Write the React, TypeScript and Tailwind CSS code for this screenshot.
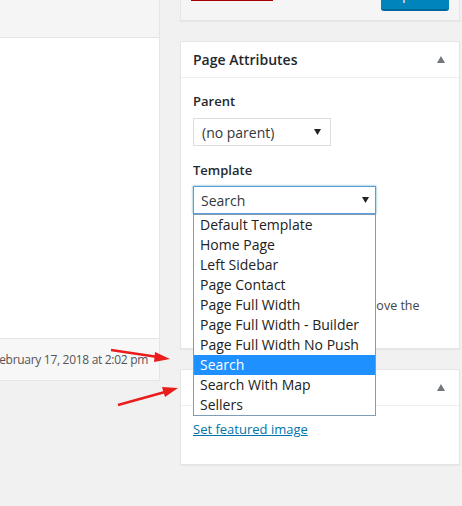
import React from "react";

const templates = [
  "Default Template",
  "Home Page",
  "Left Sidebar",
  "Page Contact",
  "Page Full Width",
  "Page Full Width - Builder",
  "Page Full Width No Push",
  "Search",
  "Search With Map",
  "Sellers",
];

function Caret() {
  return (
    <svg width="8" height="7" viewBox="0 0 8 7" className="fill-[#72777c]">
      <path d="M0 7 L4 0 L8 7 Z" />
    </svg>
  );
}

function SelectArrow() {
  return (
    <svg width="7" height="6" viewBox="0 0 7 6" className="fill-[#222]">
      <path d="M0 0 H7 L3.5 6 Z" />
    </svg>
  );
}

function Postbox({ title, children }: { title: string; children: React.ReactNode }) {
  return (
    <div className="border border-[#e5e5e5] bg-white shadow-[0_1px_1px_rgba(0,0,0,0.04)]">
      <div className="flex h-[36px] items-center justify-between border-b border-[#eeeeee] pl-[12px] pr-[14px]">
        <h2 className="text-[14px] font-semibold text-[#23282d]">{title}</h2>
        <Caret />
      </div>
      {children}
    </div>
  );
}

function Arrows() {
  return (
    <svg className="pointer-events-none absolute left-0 top-0" width="462" height="506">
      <line x1="111" y1="350" x2="158" y2="357" stroke="#ea1c1c" strokeWidth="2.5" />
      <path d="M170 359 L155 352 L154 362 Z" fill="#ea1c1c" />
      <line x1="118" y1="405" x2="165" y2="392" stroke="#ea1c1c" strokeWidth="2.5" />
      <path d="M178 388 L162 387 L165 397 Z" fill="#ea1c1c" />
    </svg>
  );
}

export default function App() {
  return (
    <div
      className="relative h-[506px] w-[462px] overflow-hidden bg-[#f1f1f1] text-[13px] text-[#444]"
      style={{ fontFamily: '"Open Sans", "Noto Sans", sans-serif' }}
    >
      <div className="flex gap-[20px]">
        {/* editor column, cut off at the left */}
        <div className="w-[160px] shrink-0">
          <div className="h-[38px] border-b border-r border-[#e5e5e5] bg-[#f5f5f5]" />
          <div className="h-[301px] border-b border-r border-[#e5e5e5] bg-white" />
          <div className="flex h-[42px] items-center justify-end overflow-hidden whitespace-nowrap border-b border-r border-[#e5e5e5] bg-[#f7f7f7] pr-[11px] text-[12px] tracking-[-0.3px] text-[#555]">
            February 17, 2018 at 2:02 pm
          </div>
        </div>

        {/* sidebar */}
        <div className="flex w-[280px] shrink-0 flex-col gap-[20px]">
          <div className="flex h-[21px] items-start justify-between border border-t-0 border-[#e5e5e5] bg-[#f5f5f5] pl-[10px] pr-[10px] shadow-[0_1px_1px_rgba(0,0,0,0.04)]">
            <div className="h-px w-[82px] bg-[#a00]" />
            <div className="-mt-[24px] h-[35px] w-[68px] rounded-[3px] border-b-2 border-[#006799] bg-[#0085ba] pt-[9px] text-center text-[13px] leading-[20px] text-white">
              Update
            </div>
          </div>

          <Postbox title="Page Attributes">
            <div className="px-[12px] pb-[12px] pt-[13px] text-[#23282d]">
              <p className="text-[13px] font-semibold leading-[20px]">Parent</p>
              <div className="mt-[7px] flex h-[28px] w-[138px] items-center justify-between border border-[#ddd] bg-white pl-[8px] pr-[9px] text-[14px] text-[#32373c]">
                <span>(no parent)</span>
                <SelectArrow />
              </div>
              <p className="mt-[14px] text-[13px] font-semibold leading-[20px]">Template</p>
              <div className="relative mt-[6px] w-[183px]">
                <div className="flex h-[28px] items-center justify-between border border-[#5b9dd9] bg-white pl-[7px] pr-[6px] text-[14px] text-[#32373c] shadow-[0_0_2px_rgba(30,140,190,0.8)]">
                  <span>Search</span>
                  <SelectArrow />
                </div>
                <ul className="absolute left-0 top-[28px] z-10 w-[183px] border border-[#7f9db9] bg-white text-[14px] text-[#222]">
                  {templates.map((t) => (
                    <li
                      key={t}
                      className={`h-[20px] whitespace-nowrap pl-[6px] leading-[20px] ${
                        t === "Search" ? "bg-[#1e90ff] text-white" : ""
                      }`}
                    >
                      {t}
                    </li>
                  ))}
                </ul>
              </div>
              <p className="mt-[14px] text-[13px] font-semibold leading-[20px]">Order</p>
              <div className="mt-[6px] h-[28px] w-[60px] border border-[#ddd] bg-white pl-[8px] leading-[26px]">0</div>
              <p className="mt-[14px] text-[12.5px] leading-[20px] text-[#444]">
                Need help? Use the Help tab above the screen title.
              </p>
            </div>
          </Postbox>

          <Postbox title="Featured Image">
            <div className="px-[12px] pb-[24px] pt-[13px]">
              <a className="text-[13px] leading-[20px] text-[#0073aa] underline">Set featured image</a>
            </div>
          </Postbox>
        </div>
      </div>
      <Arrows />
    </div>
  );
}
